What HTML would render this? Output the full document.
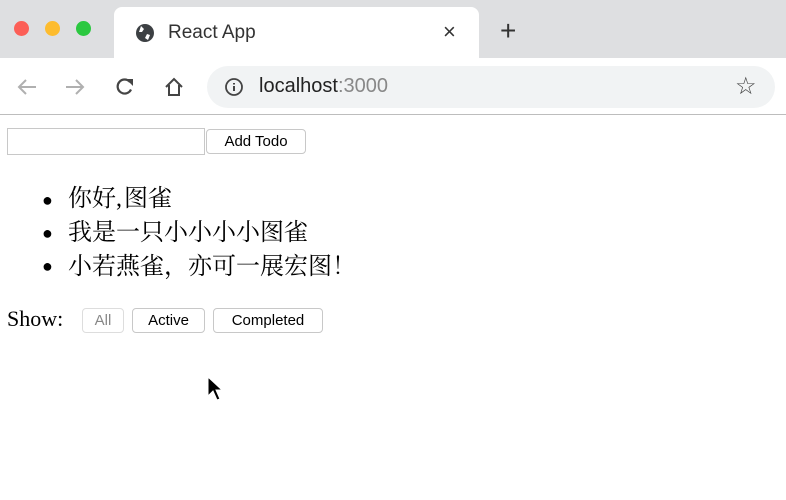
<!DOCTYPE html>
<html><head><meta charset="utf-8"><style>
*{box-sizing:border-box}
body{margin:0;width:786px;height:500px;overflow:hidden;background:#fff;font-family:"Liberation Sans",sans-serif;position:relative}
.tabs{position:absolute;left:0;top:0;width:786px;height:58px;background:#dedfe1}
.dot{position:absolute;top:21px;width:15px;height:15px;border-radius:50%}
.tab{position:absolute;left:114px;top:7px;width:365px;height:52px;background:#fff;border-radius:8px 8px 0 0}
.tb{position:absolute;left:0;top:58px;width:786px;height:57px;background:#fff;border-bottom:1px solid #bdbdbd}
.url{position:absolute;left:207px;top:8px;width:568px;height:42px;background:#f1f3f4;border-radius:21px}
.main{position:absolute;left:0;top:116px;width:786px;height:384px;font-family:"Liberation Serif","Noto Serif CJK SC",serif;font-size:22px;color:#000}
button{font-family:"Liberation Sans",sans-serif;font-size:15px;background:#fff;border:1px solid #c8c8c8;border-radius:4px;padding:0;position:absolute;height:25px;color:#000}
</style></head><body>
<div class="tabs">
<div class="dot" style="left:14px;background:#fc5f57"></div>
<div class="dot" style="left:45px;background:#fdbc2e"></div>
<div class="dot" style="left:76px;background:#2bc840"></div>
<div class="tab">
<svg style="position:absolute;left:21px;top:16px" width="20" height="20" viewBox="0 0 20 20"><circle cx="10" cy="10" r="9" fill="#3c4043"/><path d="M6 3 L9 6 L7 9 L4 9 Z M12 11 L15 12 L13 17 L10 15 Z" fill="#fff"/></svg>
<div style="position:absolute;left:54px;top:15px;font-size:19px;color:#333">React App</div>
<div style="position:absolute;left:329px;top:12px;font-size:22px;color:#333">×</div>
</div>
<div style="position:absolute;left:500px;top:17px;font-size:28px;color:#333;line-height:28px">+</div>
</div>
<div class="tb">
<svg style="position:absolute;left:16px;top:18px" width="22" height="22" viewBox="0 0 22 22"><path d="M20 11H3M10 4L3 11L10 18" fill="none" stroke="#b0b0b0" stroke-width="2"/></svg>
<svg style="position:absolute;left:64px;top:18px" width="22" height="22" viewBox="0 0 22 22"><path d="M2 11H19M12 4L19 11L12 18" fill="none" stroke="#b0b0b0" stroke-width="2"/></svg>
<svg style="position:absolute;left:114px;top:18px" width="22" height="22" viewBox="0 0 22 22"><path d="M17 13.5A7 7 0 1 1 16 6" fill="none" stroke="#444" stroke-width="2.2"/><path d="M12 3H19V10Z" fill="#444"/></svg>
<svg style="position:absolute;left:164px;top:19px" width="20" height="20" viewBox="0 0 20 20"><path d="M2 10 L10 2 L18 10 M5 8 V18 H15 V8" fill="none" stroke="#444" stroke-width="2"/></svg>
<div class="url">
<svg style="position:absolute;left:17px;top:11px" width="20" height="20" viewBox="0 0 20 20"><circle cx="10" cy="10" r="8" fill="none" stroke="#444" stroke-width="1.8"/><path d="M10 9v5M10 6v1.5" stroke="#444" stroke-width="2"/></svg>
<div style="position:absolute;left:52px;top:9px;font-size:20px;color:#222">localhost<span style="color:#888">:3000</span></div>
<div style="position:absolute;left:528px;top:6px;font-size:24px;color:#444">☆</div>
</div>
</div>
<div class="main">
<div style="position:absolute;left:7px;top:12px;width:198px;height:27px;border:1px solid #c8c8c8"></div>
<button style="left:206px;top:13px;width:100px">Add Todo</button>
<div style="position:absolute;left:68px;top:66px;line-height:34px;font-size:24px">你好,&#8202;图雀<br>我是一只小小小小图雀<br>小若燕雀<span style="display:inline-block;width:24px">，</span>亦可一展宏图<span style="display:inline-block;width:24px;text-align:center">！</span></div>
<div style="position:absolute;left:42px;top:68px;line-height:33px;font-size:18px">●<br>●<br>●</div>
<div style="position:absolute;left:7px;top:190px">Show:</div>
<button style="left:82px;top:192px;width:42px;color:#888;border-color:#ddd">All</button>
<button style="left:132px;top:192px;width:73px">Active</button>
<button style="left:213px;top:192px;width:110px">Completed</button>
<svg style="position:absolute;left:207px;top:260px" width="18" height="28" viewBox="0 0 18 28"><path d="M1 1 L1 20 L6 15 L10 24 L13 23 L9 14 L15 14 Z" fill="#000" stroke="#fff" stroke-width="1"/></svg>
</div>
</body></html>
